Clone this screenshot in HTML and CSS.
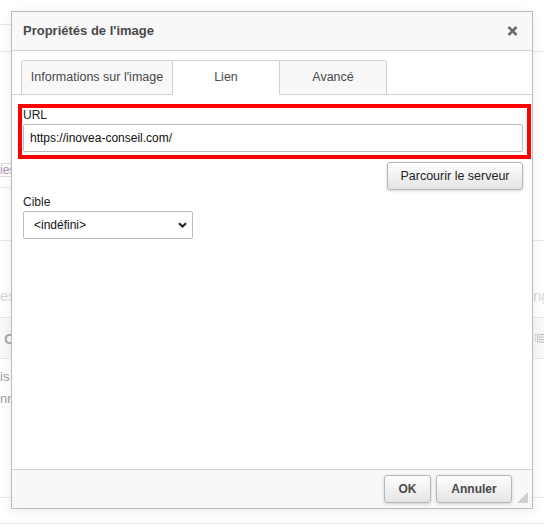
FILE: index.html
```html
<!DOCTYPE html>
<html lang="fr">
<head>
  <meta charset="UTF-8" />
  <title>Propriétés de l'image</title>
  <link rel="stylesheet" href="styles.css">
</head>
<body>
  <div class="page">
    <!-- Page behind the dialog (only the edges show) -->
    <div class="bg-stub bg-stub-top"></div>
    <div class="bg-band bg-head"></div>
    <div class="bg-band bg-form">
      <div class="bg-chip">ies</div>
      <div class="bg-stub bg-stub-form"></div>
    </div>
    <div class="bg-band bg-row bg-title">
      <span class="bg-left">es</span>
      <span class="bg-right">ng</span>
    </div>
    <div class="bg-band bg-row bg-toolbar">
      <span class="bg-left bg-icon-c">C</span>
      <span class="bg-right">
        <svg width="12" height="12" viewBox="0 0 12 12">
          <path d="M1.5 1v10" stroke="#aaa" stroke-width="1" stroke-dasharray="1 1" />
          <path d="M4.5 0.5v11" stroke="#aaa" stroke-width="1" />
          <path d="M6 2h6M6 5h6M6 8h6M6 11h6" stroke="#aaa" stroke-width="1" />
        </svg>
      </span>
    </div>
    <div class="bg-band bg-text">
      <p>is</p>
      <p>nn</p>
    </div>
    <div class="bg-band bg-foot"></div>

    <!-- Dialog -->
    <div class="dialog">
      <div class="dialog-title">
        <span>Propriétés de l'image</span>
        <svg class="close" width="11" height="10" viewBox="0 0 11 10">
          <path d="M1.5 1l8 8M9.5 1l-8 8" stroke="#6b6b6b" stroke-width="2.6" />
        </svg>
      </div>

      <div class="tabs">
        <div class="tab tab-wide">Informations sur l'image</div>
        <div class="tab selected">Lien</div>
        <div class="tab">Avancé</div>
      </div>

      <div class="dialog-body">
        <div class="field-url">
          <label class="field-label" for="url">URL</label>
          <input class="text-input" id="url" type="text" value="https://inovea-conseil.com/">
        </div>

        <div class="browse-row">
          <button class="btn btn-browse">Parcourir le serveur</button>
        </div>

        <label class="field-label label-cible" for="cible">Cible</label>
        <div class="select-box">
          <select id="cible">
            <option>&lt;indéfini&gt;</option>
          </select>
          <svg width="9" height="6" viewBox="0 0 9 6">
            <path d="M1 1.2l3.5 3.3 3.5-3.3" fill="none" stroke="#222" stroke-width="2.2" />
          </svg>
        </div>
      </div>

      <div class="dialog-footer">
        <button class="btn btn-footer btn-ok">OK</button>
        <button class="btn btn-footer btn-cancel">Annuler</button>
      </div>
      <div class="resizer"></div>
    </div>
  </div>
</body>
</html>
```

FILE: styles.css
```css
* { box-sizing: border-box; }
html, body { margin: 0; padding: 0; }
body {
  background: #fff;
  font-family: "Liberation Sans", Arial, Helvetica, sans-serif;
  font-size: 12px;
  color: #222;
}
.page {
  position: relative;
  width: 544px;
  height: 527px;
  overflow: hidden;
}

/* Page behind the dialog: the dialog covers everything but the edges */
.bg-band { border-bottom: 1px solid #e6e6e6; }
.bg-stub { width: 11px; border-bottom: 1px solid #e6e6e6; }
.bg-stub-top { height: 25px; }
.bg-head { height: 27px; }
.bg-form { height: 189px; padding-top: 111px; }
.bg-chip {
  width: 30px;
  height: 14px;
  border-top: 1px solid #ddd;
  border-bottom: 1px solid #ddd;
  color: #a58fb5;
  font-size: 12px;
  line-height: 12px;
  white-space: nowrap;
}
.bg-stub-form { height: 11px; }
.bg-row { display: flex; }
.bg-left { white-space: nowrap; }
.bg-right { margin-left: auto; width: 11px; white-space: nowrap; }
.bg-title {
  height: 77px;
  padding-top: 46px;
  font-size: 15px;
  line-height: 18px;
  color: #d6d6d6;
}
.bg-toolbar {
  height: 41px;
  align-items: center;
  background: #f9f9f9;
}
.bg-icon-c {
  padding-left: 4px;
  font-size: 15px;
  font-weight: bold;
  color: #aaa;
}
.bg-toolbar .bg-right { display: flex; padding-left: 1px; }
.bg-text {
  height: 139px;
  padding-top: 7px;
  color: #9a9a9a;
  font-size: 13px;
  line-height: 22px;
}
.bg-text p { margin: 0; }
.bg-foot { height: 26px; }

/* Dialog */
.dialog {
  position: absolute;
  left: 11px;
  top: 11px;
  width: 522px;
  height: 498px;
  border: 1px solid #bcbcbc;
  background: #fff;
  display: flex;
  flex-direction: column;
  box-shadow: 0 2px 10px rgba(0,0,0,0.08);
}
.dialog-title {
  height: 39px;
  padding: 0 14px 0 11px;
  display: flex;
  align-items: center;
  justify-content: space-between;
  background: #f8f8f8;
  border-bottom: 1px solid #d1d1d1;
  font-size: 13px;
  font-weight: bold;
  line-height: 38px;
  color: #484848;
}
.close { display: block; }

.tabs {
  display: flex;
  height: 44px;
  padding: 9px 0 0 9px;
  border-bottom: 1px solid #d1d1d1;
}
.tab {
  width: 108px;
  height: 35px;
  margin-left: -1px;
  margin-bottom: -1px;
  border: 1px solid #d1d1d1;
  border-radius: 2px 2px 0 0;
  background: #f8f8f8;
  color: #484848;
  font-size: 12.5px;
  line-height: 33px;
  text-align: center;
}
.tab-wide { width: 152px; margin-left: 0; }
.tab.selected {
  background: #fff;
  border-bottom-color: #fff;
  position: relative;
}

.dialog-body {
  flex: 1;
  padding: 9px 9px 0 11px;
}
.field-url {
  margin: 0 -8px 0 -5px;
  padding: 0 4px 3px 1px;
  border: 4px solid #f00;
}
.field-label {
  display: block;
  line-height: 14px;
  color: #222;
}
.text-input {
  display: block;
  width: 100%;
  height: 28px;
  margin: 2px 0 0;
  padding: 0 6px;
  border: 1px solid #bcbcbc;
  border-radius: 2px;
  font-family: inherit;
  font-size: 12px;
  color: #111;
  background: #fff;
}

.browse-row {
  display: flex;
  justify-content: flex-end;
  margin-top: 3px;
}
.btn {
  height: 28px;
  padding: 0;
  border: 1px solid #b6b6b6;
  border-radius: 3px;
  background: linear-gradient(#fff, #e4e4e4);
  box-shadow: 0 1px 3px rgba(0,0,0,0.18);
  font-family: inherit;
  color: #222;
}
.btn-browse { width: 136px; font-size: 12.5px; }

.label-cible { margin-top: 5px; }
.select-box {
  display: flex;
  align-items: center;
  width: 170px;
  height: 28px;
  margin-top: 2px;
  padding: 0 5px 0 10px;
  border: 1px solid #bcbcbc;
  border-radius: 2px;
  background: #fff;
}
.select-box select {
  flex: 1;
  appearance: none;
  -webkit-appearance: none;
  margin: 0;
  padding: 0;
  border: 0;
  background: transparent;
  font-family: inherit;
  font-size: 12px;
  color: #111;
  outline: none;
}
.select-box svg { display: block; }

.dialog-footer {
  height: 39px;
  padding: 5px 20px 0 0;
  display: flex;
  justify-content: flex-end;
  align-items: flex-start;
  gap: 5px;
  background: #f8f8f8;
  border-top: 1px solid #d1d1d1;
}
.btn-footer {
  font-size: 12px;
  font-weight: bold;
  color: #484848;
}
.btn-ok { width: 47px; }
.btn-cancel { width: 76px; }
.resizer {
  position: absolute;
  right: 4px;
  bottom: 5px;
  width: 0;
  height: 0;
  border-left: 11px solid transparent;
  border-bottom: 11px solid #cfcfcf;
}
```
